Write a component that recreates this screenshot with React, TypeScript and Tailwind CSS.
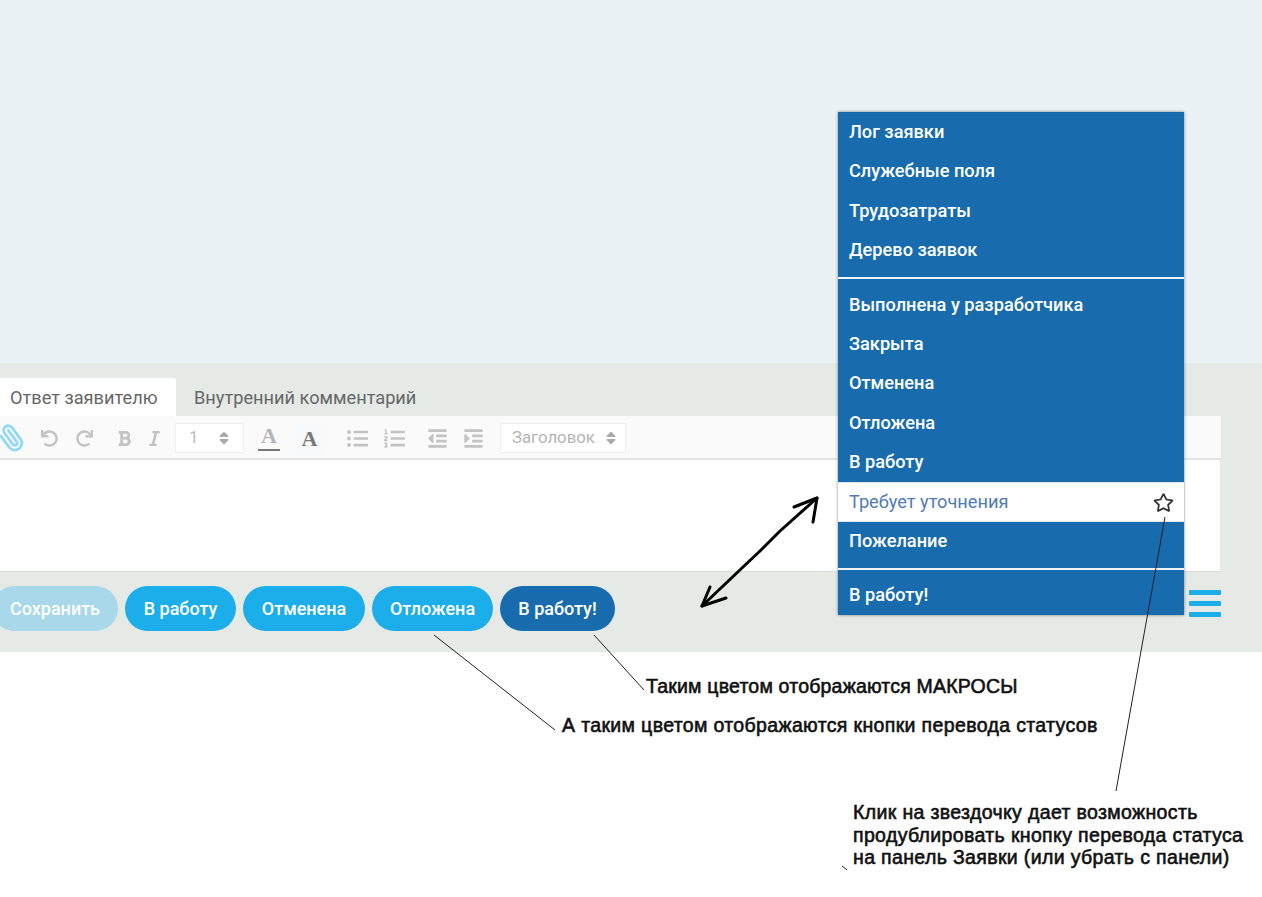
import { FaUndo, FaRedo, FaBold, FaItalic, FaListUl, FaListOl, FaOutdent, FaIndent, FaSort, FaRegStar } from 'react-icons/fa';
import { Paperclip } from 'lucide-react';

const topItems = ['Лог заявки', 'Служебные поля', 'Трудозатраты', 'Дерево заявок'];
const statusBefore = ['Выполнена у разработчика', 'Закрыта', 'Отменена', 'Отложена', 'В работу'];

const MenuItem = ({ label }: { label: string }) => (
  <div className="h-[39.4px] pl-[11px] leading-[38.6px] text-[18.2px] font-medium text-white">{label}</div>
);

const Dropdown = () => (
  <div className="absolute left-[838px] top-[112px] w-[346px] h-[503px] bg-[#186cad] border-t border-[#0f66ad] shadow-[0_0_3px_rgba(0,0,0,0.45)] font-['Roboto',sans-serif]">
    <div className="h-[164px]">
      {topItems.map((item) => (
        <MenuItem key={item} label={item} />
      ))}
    </div>
    <div className="h-[2px] bg-[#f2f6f8]" />
    <div className="pt-[6.5px]">
      {statusBefore.map((item) => (
        <MenuItem key={item} label={item} />
      ))}
      <div className="h-[39.4px] bg-white pl-[11px] pr-[10px] flex items-center justify-between text-[18.2px] text-[#4f7cb5] border-y border-[#dfe4e8]">
        <span className="-mt-[2px]">Требует уточнения</span>
        <FaRegStar className="text-[21px] text-[#333]" />
      </div>
      <MenuItem label="Пожелание" />
    </div>
    <div className="h-[2px] mt-[7px] bg-[#f2f6f8]" />
    <div className="pt-[5.5px]">
      <MenuItem label="В работу!" />
    </div>
  </div>
);

const Toolbar = () => (
  <div className="h-[44px] pt-[2px] bg-[#fafafa] border-b-2 border-[#e3e3e3] w-[1221px] flex items-center text-[#c3c3c3] relative overflow-hidden">
    <Paperclip size={28} strokeWidth={2.4} className="ml-[-2px] text-[#92d9f5] -scale-x-100 rotate-[8deg]" />
    <FaUndo className="ml-[15px] text-[17px]" />
    <FaRedo className="ml-[18px] text-[17px]" />
    <FaBold className="ml-[23px] text-[17px]" />
    <FaItalic className="ml-[13px] text-[17px]" />
    <div className="ml-[12px] w-[69px] h-[30px] bg-white border border-[#efefef] flex items-center justify-between px-[13px] font-['Roboto',sans-serif] text-[16.8px] text-[#bdbdbd]">
      <span>1</span>
      <FaSort className="text-[16px] text-[#aaa] -mr-[2px]" />
    </div>
    <div className="ml-[14px] w-[22px] flex flex-col items-center">
      <span className="font-['Liberation_Serif',serif] font-bold text-[22px] leading-[22px] text-[#b5b5b5]">A</span>
      <span className="w-[22px] h-[2px] bg-[#777] mt-[2px]" />
    </div>
    <div className="ml-[15px] w-[29px] h-[31px] bg-[#f7f9fa] flex items-center justify-center font-['Liberation_Serif',serif] font-bold text-[22px] text-[#777]">A</div>
    <FaListUl className="ml-[23px] text-[21px]" />
    <FaListOl className="ml-[16px] text-[21px]" />
    <FaOutdent className="ml-[22px] text-[21px]" />
    <FaIndent className="ml-[15px] text-[21px]" />
    <div className="ml-[16px] w-[126px] h-[30px] bg-white border border-[#efefef] flex items-center justify-between pl-[11px] pr-[6px] font-['Roboto',sans-serif] text-[16.8px] text-[#b5b5b5]">
      <span>Заголовок</span>
      <FaSort className="text-[16px] text-[#aaa]" />
    </div>
  </div>
);

const Pill = ({ label, className }: { label: string; className: string }) => (
  <div className={`h-[45px] rounded-full flex items-center justify-center text-[18px] font-medium text-white ${className}`}>{label}</div>
);

const Annotations = () => (
  <>
    <svg className="absolute inset-0 pointer-events-none" width="1262" height="897" viewBox="0 0 1262 897" fill="none">
      <g stroke="#000" strokeWidth="3" strokeLinecap="round" strokeLinejoin="round">
        <path d="M702 606 L742 568 L760 551 L780 531 L817 498" />
        <path d="M794 507 L817 498 L813 522" />
        <path d="M710 587 L702 606 L726 598" />
      </g>
      <g stroke="#222" strokeWidth="1">
        <path d="M434 635 L555 730" />
        <path d="M594 635 L644 690" />
        <path d="M1165 517 L1116 791" />
        <path d="M842 866 L847 870" />
      </g>
    </svg>
    <div className="absolute left-[646px] top-[676px] font-['Liberation_Sans',sans-serif] text-[19.5px] tracking-[0.2px] [-webkit-text-stroke:0.6px_#111] leading-[21px] text-[#111] whitespace-nowrap">Таким цветом отображаются МАКРОСЫ</div>
    <div className="absolute left-[562px] top-[715px] font-['Liberation_Sans',sans-serif] text-[19.5px] tracking-[0.36px] [-webkit-text-stroke:0.6px_#111] leading-[21px] text-[#111] whitespace-nowrap">А таким цветом отображаются кнопки перевода статусов</div>
    <div className="absolute left-[853px] top-[801px] font-['Liberation_Sans',sans-serif] text-[19.5px] tracking-[0.36px] [-webkit-text-stroke:0.6px_#111] leading-[22.5px] text-[#111] whitespace-nowrap">
      <div>Клик на звездочку дает возможность</div>
      <div>продублировать кнопку перевода статуса</div>
      <div>на панель Заявки (или убрать с панели)</div>
    </div>
  </>
);

const App = () => {
  return (
    <div className="relative w-[1262px] h-[897px] overflow-hidden bg-white font-['Roboto',sans-serif]">
      <div className="h-[363px] bg-[#eaf2f5]" />
      <div className="h-[289px] bg-[#e5eae6] pt-[15px]">
        <div className="flex h-[38px] text-[18.2px] text-[#666]">
          <div className="w-[176px] bg-white rounded-tr-[3px] pl-[10px] leading-[39px]">Ответ заявителю</div>
          <div className="pl-[18px] leading-[39px]">Внутренний комментарий</div>
        </div>
        <Toolbar />
        <div className="h-[112px] w-[1220px] bg-white border-b border-[#dcdcdc]" />
        <div className="flex items-center mt-[14px] gap-[7px]">
          <Pill label="Сохранить" className="w-[126px] -ml-[8px] bg-[#a8d8ea] text-[#eef8fc]" />
          <Pill label="В работу" className="w-[111px] bg-[#1caeea]" />
          <Pill label="Отменена" className="w-[122px] bg-[#1caeea]" />
          <Pill label="Отложена" className="w-[121px] bg-[#1caeea]" />
          <Pill label="В работу!" className="w-[115px] bg-[#186cad]" />
          <div className="ml-[567px] -mt-[11px] w-[32px] flex flex-col gap-[6px]">
            <span className="h-[5px] rounded-[1px] bg-[#1caeea]" />
            <span className="h-[5px] rounded-[1px] bg-[#1caeea]" />
            <span className="h-[5px] rounded-[1px] bg-[#1caeea]" />
          </div>
        </div>
      </div>
      <Dropdown />
      <Annotations />
    </div>
  );
};

export default App;
